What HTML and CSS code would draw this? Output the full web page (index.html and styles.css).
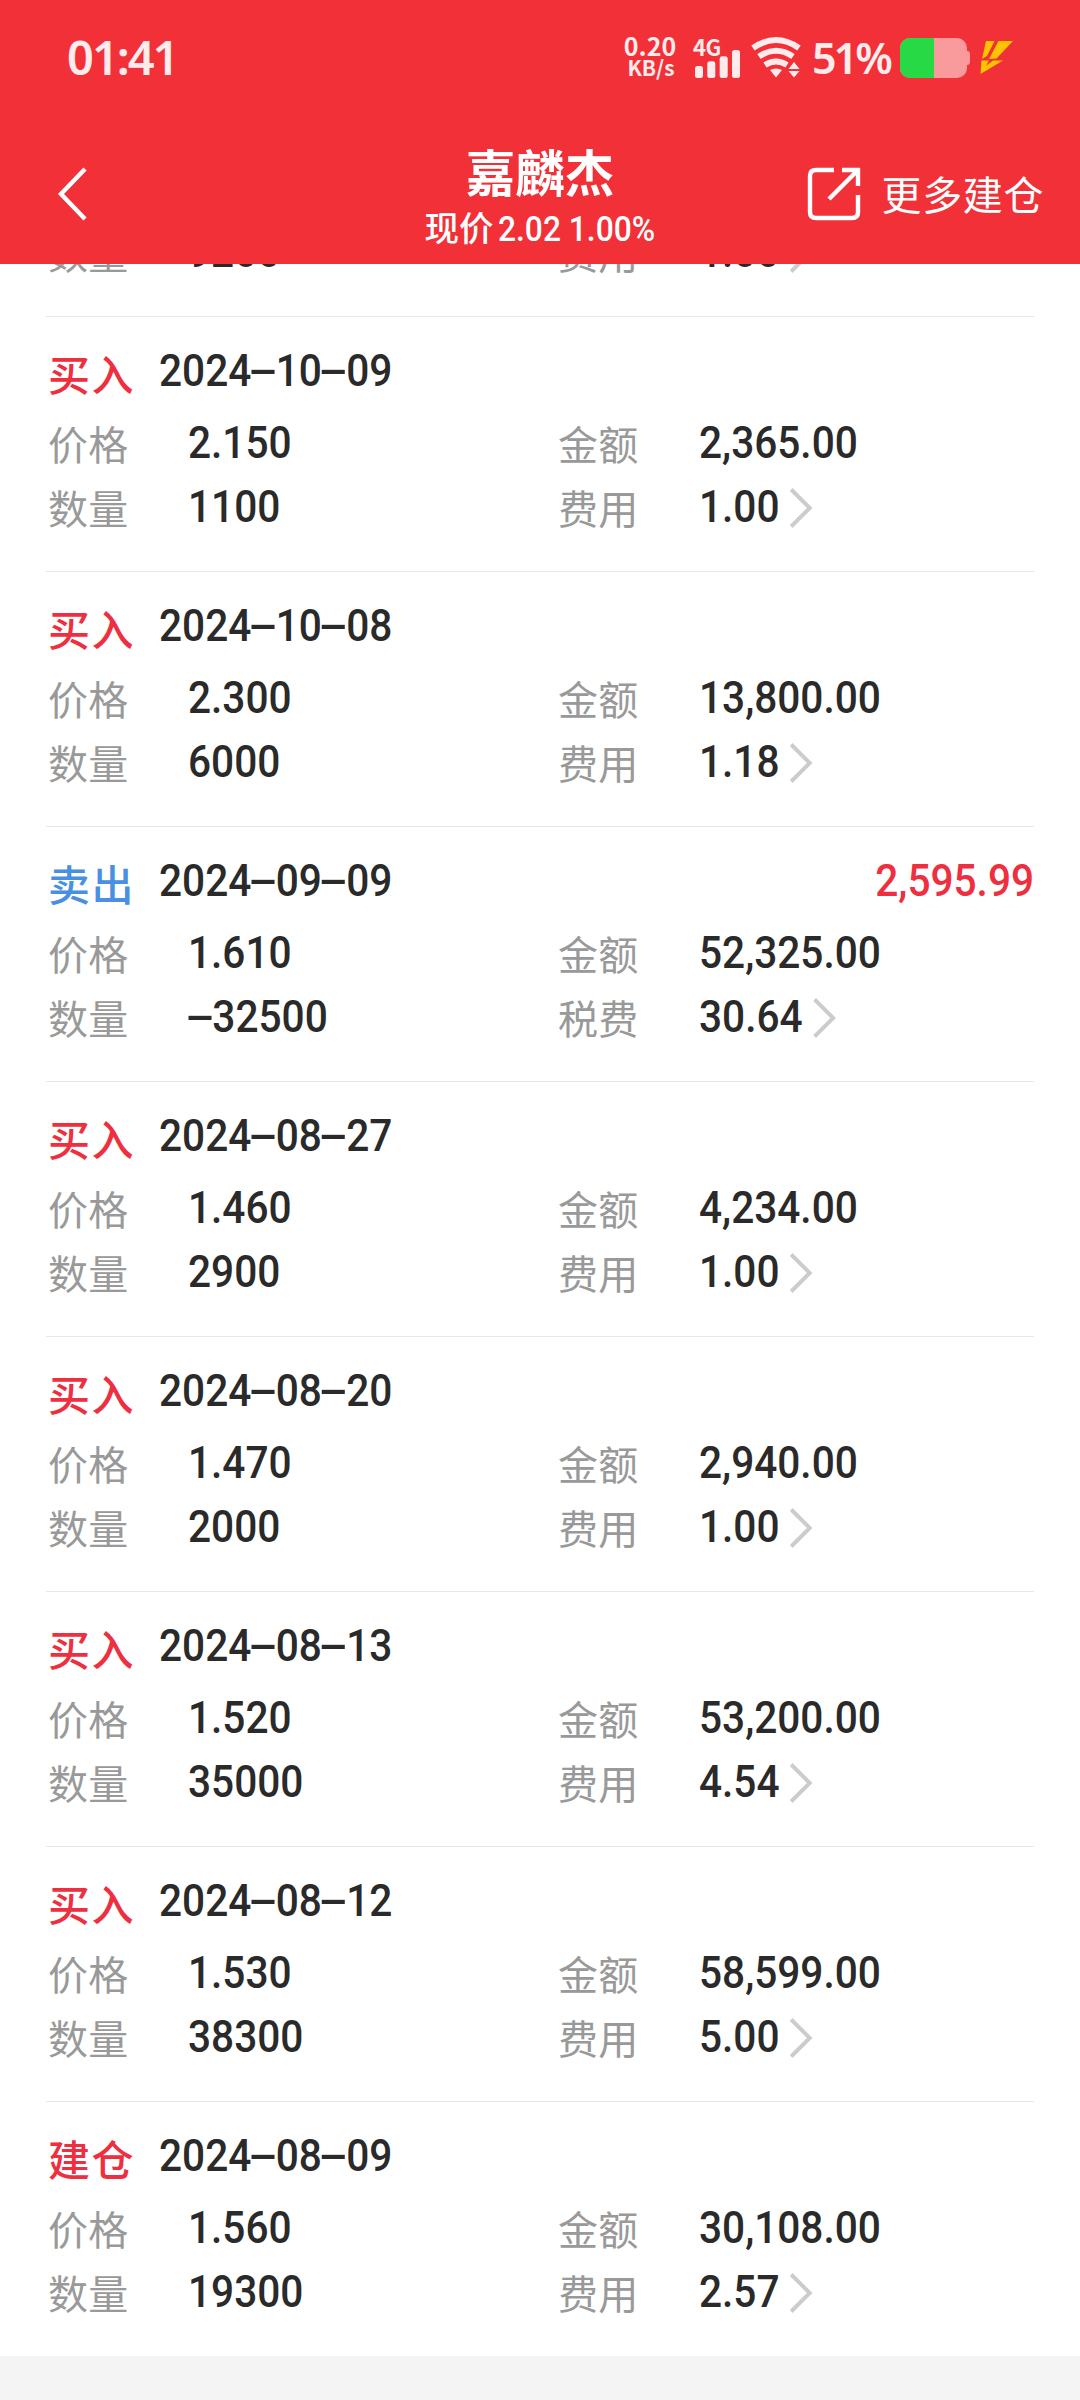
FILE: index.html
```html
<!DOCTYPE html>
<html lang="zh-CN">
<head>
    <meta charset="UTF-8">
    <meta name="viewport" content="width=device-width, initial-scale=1.0">
    <title>嘉麟杰</title>
    <link rel="stylesheet" href="styles.css">
</head>
<body>

<header>
    <div class="status-bar">
        <div class="time">01:41</div>
        <div class="status-icons">
            <div class="speed">
                <span class="speed-num">0.20</span>
                <span class="speed-unit">KB/s</span>
            </div>
            <div class="signal">
                <span class="network">4G</span>
                <svg width="46" height="28" viewBox="0 0 46 28" fill="#ffebec">
                    <rect x="0" y="16" width="8" height="12" rx="2.5"/>
                    <rect x="12.3" y="11.3" width="8" height="16.7" rx="2.5"/>
                    <rect x="24.7" y="6.3" width="8" height="21.7" rx="2.5"/>
                    <rect x="37" y="0" width="8" height="28" rx="2.5"/>
                </svg>
            </div>
            <svg class="wifi" width="50" height="42" viewBox="0 0 50 42">
                <g fill="none" stroke="#ffebec" stroke-width="6">
                    <path d="M2 12Q25 -4 48 12"/>
                    <path d="M8 20.5Q25 9 42 20.5"/>
                    <path d="M14 29Q25 22 36 29"/>
                </g>
                <path fill="#ffebec" d="M19 34Q25 31 31 34L25 41.5ZM37.5 33L43 26L48.5 33ZM37.5 35L48.5 35L43 41.5Z"/>
            </svg>
            <span class="percent">51%</span>
            <div class="battery">
                <div class="battery-level"></div>
            </div>
            <svg class="bolt" width="34" height="34" viewBox="0 0 34 34" fill="#ffc400">
                <path d="M6 0H14.5L7 15L2 18ZM18.5 0H33L16.5 17.5L9 18ZM1.5 19.5H9L6 25L13 19.5H23L0.5 33Z"/>
            </svg>
        </div>
    </div>
    <div class="nav-bar">
        <svg class="back" width="32" height="56" viewBox="0 0 32 56" fill="none" stroke="#fff" stroke-width="4.4">
            <path d="M29 3L5 28L29 53"/>
        </svg>
        <div class="stock">
            <h1>嘉麟杰</h1>
            <div class="quote">现价<span class="quote-num">2.02 1.00%</span></div>
        </div>
        <div class="more">
            <svg width="54" height="54" viewBox="0 0 54 54" fill="none" stroke="#fff" stroke-width="4.4">
                <path d="M27 3H9Q3 3 3 9V45Q3 51 9 51H45Q51 51 51 45V28"/>
                <path d="M35 3H51V19M51 3L22 32"/>
            </svg>
            <span>更多建仓</span>
        </div>
    </div>
</header>

<div class="records" id="records"></div>

<script>
    const records = [
        ["买入", "2024-10-10", "2.130", "9200", "19,596.00", "费用", "1.00"],
        ["买入", "2024-10-09", "2.150", "1100", "2,365.00", "费用", "1.00"],
        ["买入", "2024-10-08", "2.300", "6000", "13,800.00", "费用", "1.18"],
        ["卖出", "2024-09-09", "1.610", "-32500", "52,325.00", "税费", "30.64", "2,595.99"],
        ["买入", "2024-08-27", "1.460", "2900", "4,234.00", "费用", "1.00"],
        ["买入", "2024-08-20", "1.470", "2000", "2,940.00", "费用", "1.00"],
        ["买入", "2024-08-13", "1.520", "35000", "53,200.00", "费用", "4.54"],
        ["买入", "2024-08-12", "1.530", "38300", "58,599.00", "费用", "5.00"],
        ["建仓", "2024-08-09", "1.560", "19300", "30,108.00", "费用", "2.57"]
    ];
    const chevron = '<svg class="chevron" width="26" height="42" viewBox="0 0 24 42" preserveAspectRatio="none"><path d="M2 2.5L21 21L2 39.5" fill="none" stroke="#ccc" stroke-width="4"/></svg>';

    function num(text) {
        return text.replace(/-/g, '<span class="dash">-</span>');
    }

    document.getElementById("records").innerHTML = records.map(function(r) {
        return `
        <div class="record">
            <div class="record-head">
                <span class="type ${r[0] === "卖出" ? "sell" : "buy"}">${r[0]}</span>
                <span class="value">${num(r[1])}</span>
                <span class="profit">${r[7] || ""}</span>
            </div>
            <div class="record-row">
                <span class="label">价格</span><span class="value">${r[2]}</span>
                <span class="label">金额</span><span class="value">${r[4]}</span>
            </div>
            <div class="record-row">
                <span class="label">数量</span><span class="value">${num(r[3])}</span>
                <span class="label">${r[5]}</span><span class="value">${r[6]}${chevron}</span>
            </div>
        </div>`;
    }).join("");
</script>

</body>
</html>
```
FILE: styles.css
```css
* {
    box-sizing: border-box;
}
body {
    font-family: "Noto Sans CJK SC", sans-serif;
    margin: 0;
    height: 2400px;
    background-color: #f4f4f4;
    display: flex;
    flex-direction: column;
    overflow: hidden;
}
header {
    background-color: #f23037;
    color: #fff;
    height: 264px;
    flex: none;
}
.status-bar {
    height: 116px;
    padding: 0 66px 0 67px;
    display: flex;
    justify-content: space-between;
    color: #ffebec;
    line-height: 1;
}
.time {
    font-family: "Noto Sans", sans-serif;
    font-size: 47px;
    font-weight: 600;
    letter-spacing: -2px;
    line-height: 115px;
}
.status-icons {
    display: flex;
    height: 78px;
    align-items: flex-end;
}
.speed {
    display: flex;
    flex-direction: column;
    width: 54px;
    align-items: center;
    font-weight: 700;
}
.speed-num {
    font-size: 25px;
    line-height: 23px;
}
.speed-unit {
    font-size: 21px;
    line-height: 21px;
    margin-left: 2px;
}
.signal {
    width: 48px;
    margin-left: 16px;
    display: flex;
    flex-direction: column;
}
.network {
    font-size: 22px;
    font-weight: 700;
    line-height: 20px;
    letter-spacing: -0.5px;
    margin-bottom: -6px;
}
.signal svg {
    margin-left: 2px;
}
.wifi {
    margin-left: 10px;
}
.percent {
    font-family: "Noto Sans", sans-serif;
    font-size: 43px;
    font-weight: 600;
    letter-spacing: -3px;
    line-height: 41px;
    width: 76px;
    margin-left: 11px;
    margin-right: -1px;
}
.battery {
    width: 67px;
    height: 40px;
    margin-left: 13px;
    border-radius: 10px;
    background-color: #f99b9d;
    position: relative;
}
.battery::after {
    content: "";
    position: absolute;
    right: -3px;
    top: 13px;
    width: 3px;
    height: 14px;
    background-color: #f99b9d;
    border-radius: 0 3px 3px 0;
}
.battery-level {
    width: 50%;
    height: 100%;
    background-color: #28d946;
    border-radius: 10px 0 0 10px;
}
.bolt {
    margin: 0 0 3px 13px;
}
.nav-bar {
    height: 148px;
    padding: 0 36px;
    display: grid;
    grid-template-columns: 1fr auto 1fr;
    align-items: start;
}
.back {
    margin: 50px 0 0 20px;
}
.stock {
    text-align: center;
}
h1 {
    margin: 22px 0 0;
    font-size: 49.5px;
    font-weight: 700;
    line-height: 66px;
}
.quote {
    font-size: 34.5px;
    font-weight: 500;
    line-height: 44px;
    white-space: nowrap;
    margin-left: 7px;
}
.quote-num {
    font-family: Roboto, sans-serif;
    font-size: 34.5px;
    display: inline-block;
    margin-left: 4px;
    margin-right: -6px;
    transform: scaleX(0.92);
    transform-origin: left center;
}
.more {
    display: flex;
    justify-content: flex-end;
    margin-top: 51px;
    font-size: 40px;
    line-height: 53px;
}
.more span {
    letter-spacing: 0.6px;
    margin-left: 21px;
}
.records {
    background-color: #fff;
    height: 2092px;
    padding: 0 46px;
    display: flex;
    flex-direction: column;
    justify-content: flex-end;
    overflow: hidden;
}
.record {
    height: 255px;
    flex: none;
    padding: 27px 0 0 2px;
    border-top: 1px solid #e8e8e8;
}
.record-head {
    display: flex;
    height: 68px;
}
.type {
    width: 111px;
    font-size: 42px;
    font-weight: 500;
    letter-spacing: 1.5px;
    line-height: 57px;
}
.buy {
    color: #ee2f40;
}
.sell {
    color: #4a90e2;
}
.value, .profit {
    font-family: Roboto, sans-serif;
    font-size: 45px;
    font-weight: 500;
    line-height: 54px;
    color: #2a2a2a;
    white-space: nowrap;
    transform: scaleX(0.902);
    transform-origin: left center;
}
.profit {
    margin-left: auto;
    color: #ee2f40;
    transform-origin: right center;
}
.dash {
    display: inline-block;
    width: 27px;
    text-align: center;
    transform: translateY(-1px) scaleX(2.2);
}
.record-row {
    height: 64px;
    display: grid;
    grid-template-columns: 140px 370px 141px auto;
}
.record-row .value {
    line-height: 62px;
}
.label {
    font-size: 40px;
    letter-spacing: 0.3px;
    line-height: 63px;
    color: #999;
}
.chevron {
    margin-left: 11px;
    vertical-align: -7px;
}
```
